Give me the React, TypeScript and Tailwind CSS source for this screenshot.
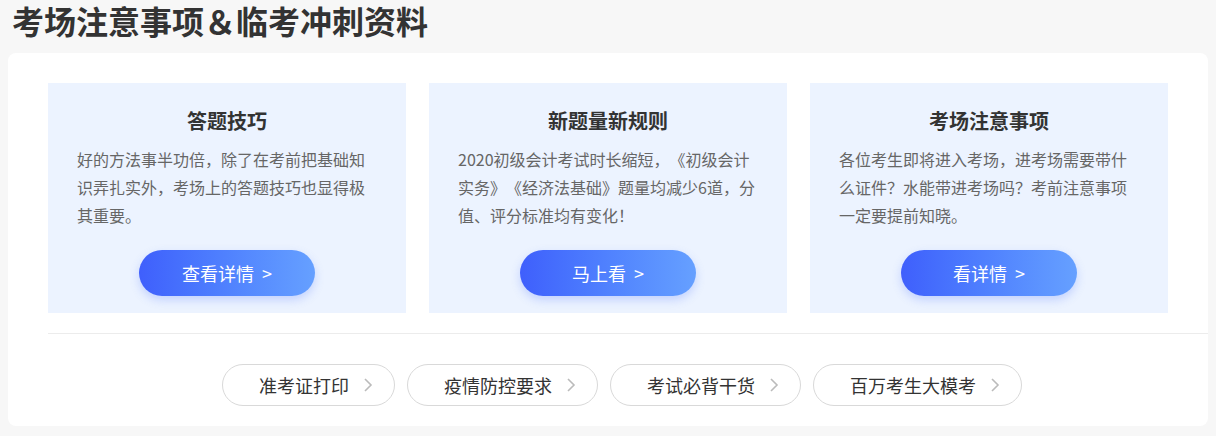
const font = { fontFamily: '"Noto Sans CJK SC", "Noto Sans", sans-serif' };

export default function App() {
  const cards = [
    {
      title: "答题技巧",
      desc: "好的方法事半功倍，除了在考前把基础知识弄扎实外，考场上的答题技巧也显得极其重要。",
      btn: "查看详情",
    },
    {
      title: "新题量新规则",
      desc: "2020初级会计考试时长缩短，《初级会计实务》《经济法基础》题量均减少6道，分值、评分标准均有变化！",
      btn: "马上看",
    },
    {
      title: "考场注意事项",
      desc: "各位考生即将进入考场，进考场需要带什么证件？水能带进考场吗？考前注意事项一定要提前知晓。",
      btn: "看详情",
    },
  ];

  const links = ["准考证打印", "疫情防控要求", "考试必背干货", "百万考生大模考"];

  return (
    <div className="w-[1216px] h-[436px] bg-[#f7f7f7] overflow-hidden [text-spacing-trim:space-all]" style={font}>
      <h1 className="pl-[12px] text-[32px] leading-[40px] font-bold text-[#333]">
        考场注意事项＆临考冲刺资料
      </h1>

      <div className="mt-[13px] mx-[8px] bg-white rounded-[8px] pt-[30px] pb-[20px]">
        <div className="grid grid-cols-[358px_358px_358px] gap-[23px] pl-[40px]">
          {cards.map((c) => (
            <div key={c.title} className="bg-[#ecf3ff] pt-[24px] pb-[17px] flex flex-col items-center">
              <h3 className="text-[20px] leading-[28px] font-bold text-[#333]">{c.title}</h3>
              <p className="mt-[10px] pl-[29px] pr-[31px] text-[16px] leading-[28px] text-[#666] w-full">{c.desc}</p>
              <button className="mt-[21px] w-[176px] h-[46px] rounded-full bg-gradient-to-r from-[#3f5ffc] to-[#66a0ff] text-white text-[18px] shadow-[0_4px_10px_rgba(70,110,250,0.25)]">
                {c.btn}
                <span className="ml-[8px]">&gt;</span>
              </button>
            </div>
          ))}
        </div>

        <div className="ml-[40px] mt-[20px] border-t border-[#ececec]" />

        <div className="mt-[30px] flex gap-[12px] pl-[214px]">
          {links.map((l) => (
            <div
              key={l}
              className="h-[42px] rounded-full border border-[#d9d9d9] flex items-center pl-[36px] pr-[21px] text-[18px] text-[#333]"
            >
              <span>{l}</span>
              <svg width="10" height="16" viewBox="0 0 10 16" className="ml-[14px]">
                <polyline points="2,2 8,8 2,14" fill="none" stroke="#bbb" strokeWidth="1.6" />
              </svg>
            </div>
          ))}
        </div>
      </div>
    </div>
  );
}
